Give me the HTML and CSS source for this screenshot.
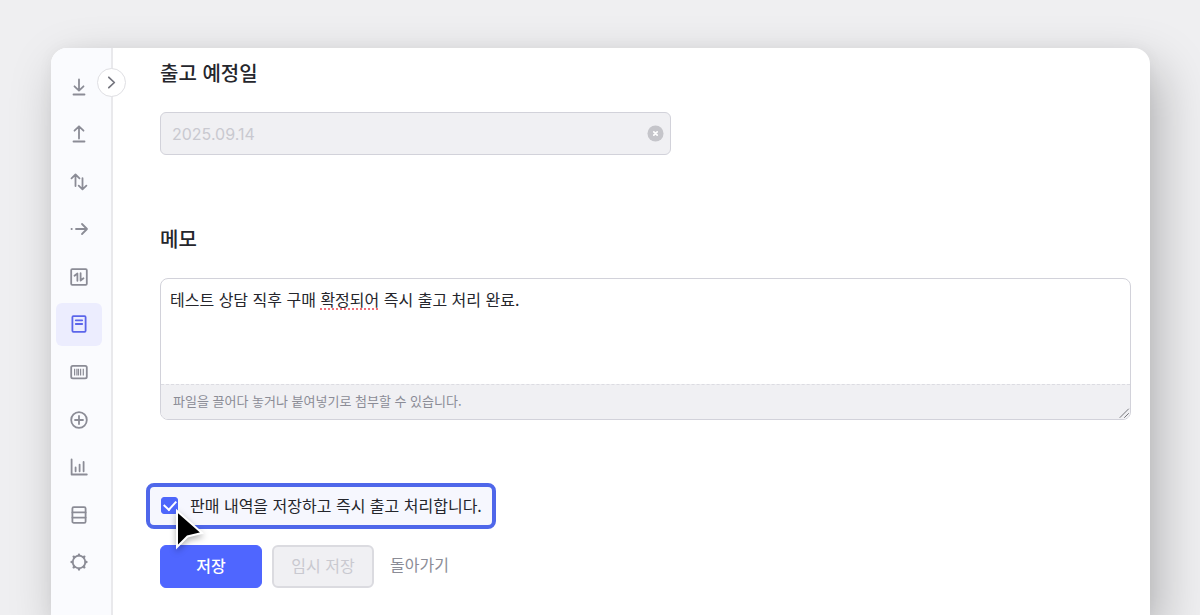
FILE: index.html
```html
<!DOCTYPE html>
<html lang="ko">

<head>
    <meta charset="utf-8">
    <meta name="viewport" content="width=device-width, initial-scale=1">
    <title>출고 예정일</title>
    <link rel="stylesheet" href="styles.css">
</head>
<body>
    <div class="window">
        <aside class="sidebar">
            <nav class="menu">
                <a href="#" class="menu-item" aria-label="입고">
                    <svg viewBox="0 0 20 20"><path d="M10 2.5v11M5.5 9.3l4.5 4.4 4.5-4.4M4.5 17.5h11"/></svg>
                </a>
                <a href="#" class="menu-item" aria-label="출고">
                    <svg viewBox="0 0 20 20"><path d="M10 14.5v-12M5.5 6.7L10 2.3l4.5 4.4M4.5 17.5h11"/></svg>
                </a>
                <a href="#" class="menu-item" aria-label="조정">
                    <svg viewBox="0 0 20 20"><path d="M6.5 14V2.6M2.5 6.3l4-3.8 4 3.8M13.5 6.2v11M9.7 13.7l3.8 3.7 3.9-3.7"/></svg>
                </a>
                <a href="#" class="menu-item" aria-label="이동">
                    <svg viewBox="0 0 20 20"><path d="M2.5 10h.3M7 10h11M13 5l5 5-5 5"/></svg>
                </a>
                <a href="#" class="menu-item" aria-label="내역">
                    <svg viewBox="0 0 20 20"><rect x="2.2" y="2.2" width="15.6" height="15.6" rx="1"/><path d="M5.5 8.8l2.9-2.3v7.3M11.6 6.2v7.3l2.9-2.3"/></svg>
                </a>
                <a href="#" class="menu-item active" aria-label="판매" aria-current="page">
                    <svg viewBox="0 0 20 20"><rect x="3.4" y="2.2" width="13.2" height="15.6" rx="1"/><path d="M6.8 6.3h6.4M6.8 10h6.4"/></svg>
                </a>
                <a href="#" class="menu-item" aria-label="바코드">
                    <svg viewBox="0 0 20 20"><rect x="2.2" y="3.8" width="15.6" height="12.6" rx="1.6"/><path class="thin" d="M5.6 6.8v6.6M7.9 6.8v6.6M9.5 6.8v6.6M11.6 6.8v6.6M14.3 6.8v6.6"/></svg>
                </a>
                <a href="#" class="menu-item" aria-label="추가">
                    <svg viewBox="0 0 20 20"><circle cx="10" cy="10" r="7.8"/><path d="M10 6v8M6 10h8"/></svg>
                </a>
                <a href="#" class="menu-item" aria-label="통계">
                    <svg viewBox="0 0 20 20"><path d="M2.6 2.5v15h15.2M6.6 14.3v-3.9M10.6 14.3V7.6M14.6 14.3V5"/></svg>
                </a>
                <a href="#" class="menu-item" aria-label="데이터">
                    <svg viewBox="0 0 20 20"><rect x="3.4" y="2.2" width="13.2" height="15.6" rx="1.4"/><path d="M3.4 7.4h13.2M3.4 12.6h13.2"/></svg>
                </a>
                <a href="#" class="menu-item" aria-label="설정">
                    <svg viewBox="0 0 20 20"><circle cx="10" cy="10" r="6.3"/><path class="teeth" d="M10 3.3V2.6M10 16.7v.7M3.3 10h-.7M16.7 10h.7M5.2 5.2l-.5-.5M14.8 5.2l.5-.5M5.2 14.8l-.5.5M14.8 14.8l.5.5"/></svg>
                </a>
            </nav>
            <button type="button" class="toggle" aria-label="메뉴 펼치기">
                <svg viewBox="0 0 20 20"><path d="M7.2 4.5l5.8 5.5-5.8 5.5"/></svg>
            </button>
        </aside>

        <main class="content">
            <form class="sale-form">
                <label class="title" for="date">출고 예정일</label>
                <div class="date-field">
                    <input type="text" id="date" class="date-input" value="2025.09.14" disabled>
                    <button type="button" class="clear-btn" aria-label="날짜 지우기" disabled>
                        <svg viewBox="0 0 18 18"><circle cx="9" cy="9" r="8.5"/><path d="M7.2 7.2l3.6 3.6M10.8 7.2l-3.6 3.6"/></svg>
                    </button>
                </div>

                <label class="title" for="memo">메모</label>
                <div class="memo">
                    <textarea id="memo" class="memo-input" spellcheck="false">테스트 상담 직후 구매 확정되어 즉시 출고 처리 완료.</textarea>
                    <span class="misspell"></span>
                    <div class="memo-hint">파일을 끌어다 놓거나 붙여넣기로 첨부할 수 있습니다.</div>
                    <svg class="grip" viewBox="0 0 12 12"><path d="M2 10.5L10.5 2M6.5 10.5l4-4"/></svg>
                </div>

                <div class="ship-now">
                    <input type="checkbox" id="ship" class="ship-check" checked>
                    <label for="ship">판매 내역을 저장하고 즉시 출고 처리합니다.</label>
                    <svg class="pointer" viewBox="0 0 34 46"><path d="M5 4v36l10.5-10.5L30 26z"/></svg>
                </div>

                <div class="actions">
                    <button type="submit" class="btn save-btn">저장</button>
                    <button type="button" class="btn draft-btn" disabled>임시 저장</button>
                    <a href="#" class="back-link">돌아가기</a>
                </div>
            </form>
        </main>
    </div>
</body>

</html>
```

FILE: styles.css
```css
*{
    box-sizing: border-box;
}
body{
    margin: 0;
    padding: 48px 50px 0 51px;
    min-height: 100vh;
    overflow: hidden;
    background-color: #efeff1;
    color: #25262c;
    font-family: "Noto Sans CJK KR", sans-serif;
    font-size: 16px;
    line-height: 24px;
}
input, textarea, button{
    font: inherit;
    margin: 0;
}
svg{
    display: block;
    fill: none;
    stroke: currentColor;
    stroke-width: 1.8;
    stroke-linecap: round;
    stroke-linejoin: round;
}
.window{
    display: flex;
    min-height: calc(100vh - 48px);
    background-color: #fff;
    border-radius: 16px 16px 0 0;
    box-shadow: 10px 20px 50px rgba(0, 0, 0, 0.25), 0 0 16px rgba(0, 0, 0, 0.04);
}

/* sidebar */
.sidebar{
    position: relative;
    display: flex;
    flex: none;
    width: 62px;
    padding: 17px 9px 32px 5px;
    background-color: #fafbfe;
    border-right: 2px solid #e9e9ec;
    border-radius: 16px 0 0 0;
}
.menu{
    display: flex;
    flex-flow: column;
    justify-content: space-between;
}
.menu-item{
    display: flex;
    align-items: center;
    justify-content: center;
    width: 46px;
    height: 43px;
    border-radius: 6px;
    color: #8b8c96;
}
.menu-item svg{
    width: 20px;
    height: 20px;
}
.menu-item .thin{
    stroke-width: 1.2;
    stroke-linecap: butt;
}
.menu-item .teeth{
    stroke-width: 2.4;
}
.menu-item.active{
    background-color: #ecedfe;
    color: #5b65ea;
}
.toggle{
    position: absolute;
    top: 20px;
    right: -15px;
    width: 29px;
    height: 29px;
    padding: 4px;
    background-color: #fff;
    border: 1px solid #dfdfe3;
    border-radius: 50%;
    color: #74757e;
    cursor: pointer;
}
.toggle svg{
    width: 19px;
    height: 19px;
}

/* form */
.content{
    flex: 1;
    padding: 11px 19px 28px 47px;
}
.title{
    display: block;
    margin-bottom: 25px;
    font-size: 20px;
    font-weight: 500;
    line-height: 28px;
}
.date-field{
    position: relative;
    max-width: 511px;
    margin-bottom: 70px;
}
.date-input{
    display: block;
    width: 100%;
    height: 43px;
    padding: 0 40px 0 11px;
    background-color: #f0f0f3;
    border: 1px solid #d2d2da;
    border-radius: 6px;
    color: #c9c9d0;
    font-family: Inter, sans-serif;
}
.clear-btn{
    position: absolute;
    top: 13px;
    right: 7px;
    padding: 0;
    border: none;
    background: none;
}
.clear-btn svg{
    width: 17px;
    height: 17px;
    stroke: #fff;
}
.clear-btn circle{
    fill: #c5c5ca;
    stroke: none;
}
.memo{
    position: relative;
    margin-bottom: 63px;
    border: 1px solid #d2d2da;
    border-radius: 8px;
}
.memo-input{
    display: block;
    width: 100%;
    height: 105px;
    padding: 8px 9px;
    border: none;
    outline: none;
    background: none;
    color: inherit;
    resize: none;
}
/* spelling mark under the word */
.misspell{
    position: absolute;
    top: 29px;
    left: 159px;
    width: 58px;
    border-bottom: 2px dotted #f0707a;
}
.memo-hint{
    padding: 4px 12px 6px;
    background-color: #f0f0f3;
    border-top: 1px dashed #dcdce2;
    border-radius: 0 0 7px 7px;
    color: #8b8c96;
    font-size: 13px;
}
.grip{
    position: absolute;
    right: 0;
    bottom: 0;
    width: 12px;
    height: 12px;
    color: #77777c;
    stroke-width: 1;
}
.ship-now{
    position: relative;
    display: flex;
    align-items: center;
    gap: 12px;
    width: fit-content;
    height: 46px;
    margin: 0 0 16px -14px;
    padding: 0 10px 2px 11px;
    background-color: #f6f7fe;
    border: 4px solid #4f67ea;
    border-radius: 8px;
}
.ship-check{
    appearance: none;
    display: flex;
    align-items: center;
    justify-content: center;
    width: 17px;
    height: 17px;
    border-radius: 3px;
    border: 1px solid #4d66fb;
}
.ship-check:checked{
    background-color: #4d66fb;
}
.ship-check:checked::after{
    content: "";
    width: 6px;
    height: 10px;
    margin-bottom: 3px;
    border: solid #fff;
    border-width: 0 2px 2px 0;
    transform: rotate(42deg);
}
.pointer{
    position: absolute;
    top: 20px;
    left: 22px;
    width: 34px;
    height: 46px;
    overflow: visible;
    fill: #000;
    stroke: #fff;
    stroke-width: 2;
    stroke-linejoin: miter;
    filter: drop-shadow(0 3px 3px rgba(0, 0, 0, 0.3));
    pointer-events: none;
}
.actions{
    display: flex;
    gap: 10px;
}
.btn{
    width: 102px;
    height: 43px;
    padding: 0 0 4px;
    border: 1px solid #4f66ff;
    border-radius: 6px;
    cursor: pointer;
}
.save-btn{
    background-color: #4f66ff;
    color: #fff;
    font-weight: 500;
}
.draft-btn{
    background-color: #f0f0f3;
    border: 2px solid #dbdbe0;
    color: #c9c9d0;
}
.back-link{
    padding: 7px 6px;
    color: #8b8c96;
    text-decoration: none;
}
```
